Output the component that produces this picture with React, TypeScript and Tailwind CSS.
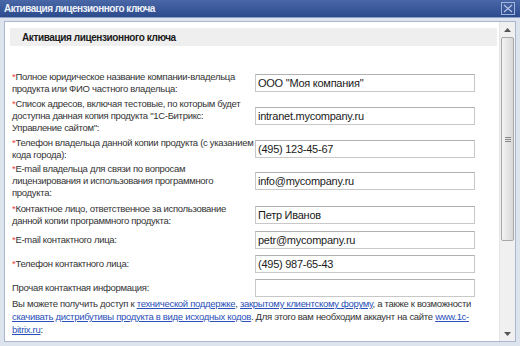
import React from "react";

type Row = { lines: string[]; value: string; req: boolean; mt: string };

const rows: Row[] = [
  { lines: ["Полное юридическое название компании-владельца", "продукта или ФИО частного владельца:"], value: 'ООО "Моя компания"', req: true, mt: "mt-[25px]" },
  { lines: ["Список адресов, включая тестовые, по которым будет", 'доступна данная копия продукта "1С-Битрикс:', 'Управление сайтом":'], value: "intranet.mycompany.ru", req: true, mt: "mt-[3px]" },
  { lines: ["Телефон владельца данной копии продукта (с указанием", "кода города):"], value: "(495) 123-45-67", req: true, mt: "mt-[3px]" },
  { lines: ["E-mail владельца для связи по вопросам", "лицензирования и использования программного", "продукта:"], value: "info@mycompany.ru", req: true, mt: "mt-[2px]" },
  { lines: ["Контактное лицо, ответственное за использование", "данной копии программного продукта:"], value: "Петр Иванов", req: true, mt: "mt-[4px]" },
  { lines: ["E-mail контактного лица:"], value: "petr@mycompany.ru", req: true, mt: "mt-[4px]" },
  { lines: ["Телефон контактного лица:"], value: "(495) 987-65-43", req: true, mt: "mt-[6px]" },
  { lines: ["Прочая контактная информация:"], value: "", req: false, mt: "mt-[6px]" },
];

export default function App() {
  return (
    <div className="w-[520px] h-[346px] bg-[#dde4ee] flex flex-col overflow-hidden" style={{ fontFamily: "'Liberation Sans', Arial, sans-serif" }}>
      {/* title bar */}
      <div className="h-[18px] shrink-0 bg-gradient-to-b from-[#4a68a8] to-[#2c4b8c] flex items-center justify-between pl-[4px] pr-[5px] border-b border-[#8ea2c8]">
        <span className="text-[10px] font-bold text-[#eef2fa] leading-none tracking-[-0.5px]">Активация лицензионного ключа</span>
        <div className="w-[14px] h-[13px] border border-[#9fb3da] flex items-center justify-center">
          <svg width="10" height="9" viewBox="0 0 10 9">
            <path d="M1 1 L9 8 M9 1 L1 8" stroke="#b8c8e8" strokeWidth="1.2" />
          </svg>
        </div>
      </div>

      {/* body */}
      <div className="flex-1 px-[4px] pt-[3px] pb-[4px] flex">
        <div className="flex-1 flex bg-white border border-[#a9b8cf] overflow-hidden">
          {/* content */}
          <div className="flex-1 pl-[5px] pr-[2px] pt-[6px] overflow-hidden">
            <div className="h-[18px] bg-[#efefef] flex items-center pl-[12px]">
              <span className="text-[10px] font-bold text-[#1a1a1a] tracking-[-0.4px]">Активация лицензионного ключа</span>
            </div>
            <div className="flex flex-col">
              {rows.map((r, i) => (
                <div key={i} className={`flex items-center ${r.mt}`}>
                  <div className="w-[245px] shrink-0 pl-[2px] text-[9.5px] leading-[12px] text-[#333] tracking-[-0.3px] whitespace-nowrap">
                    {r.lines.map((l, j) => (
                      <div key={j}>
                        {j === 0 && r.req && <span className="text-[#ee4444]">*</span>}
                        {l}
                      </div>
                    ))}
                  </div>
                  <div className="w-[220px] h-[18px] border border-[#c8c8c8] border-t-[#b0b0b0] bg-white flex items-center px-[2px] text-[11px] text-[#1a1a1a] tracking-[-0.25px] leading-none">
                    {r.value}
                  </div>
                </div>
              ))}
            </div>
            <p className="pl-[2px] text-[9.5px] leading-[13px] text-[#333] tracking-[-0.3px] whitespace-nowrap">
              Вы можете получить доступ к <a className="text-[#2a4fb8] underline">технической поддержке</a>,{" "}
              <a className="text-[#2a4fb8] underline">закрытому клиентскому форуму</a>, а также к возможности
              <br />
              <a className="text-[#2a4fb8] underline">скачивать дистрибутивы продукта в виде исходных кодов</a>. Для этого вам необходим аккаунт на сайте{" "}
              <a className="text-[#2a4fb8] underline">www.1c-</a>
              <br />
              <a className="text-[#2a4fb8] underline">bitrix.ru</a>:
            </p>
          </div>
          {/* scrollbar */}
          <div className="w-[16px] shrink-0 bg-[#f0f0f0] border-l border-[#e4e4e4] flex flex-col">
            <div className="h-[15px] flex items-center justify-center">
              <svg width="7" height="4" viewBox="0 0 7 4"><path d="M0 4 L3.5 0 L7 4 Z" fill="#555" /></svg>
            </div>
            <div className="mx-[1px] h-[204px] rounded-[2px] border border-[#a8a8a8] bg-gradient-to-r from-[#f4f4f4] to-[#d8d8d8] flex items-center justify-center">
              <div className="flex flex-col gap-[1px]">
                <div className="w-[6px] h-px bg-[#888]" />
                <div className="w-[6px] h-px bg-[#888]" />
                <div className="w-[6px] h-px bg-[#888]" />
              </div>
            </div>
            <div className="flex-1" />
            <div className="h-[14px] flex items-center justify-center">
              <svg width="7" height="4" viewBox="0 0 7 4"><path d="M0 0 L3.5 4 L7 0 Z" fill="#555" /></svg>
            </div>
          </div>
        </div>
      </div>
    </div>
  );
}
